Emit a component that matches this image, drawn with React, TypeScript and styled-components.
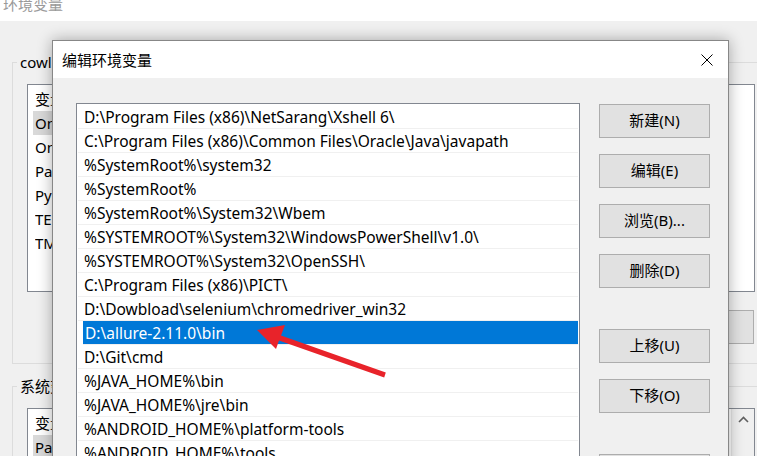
import React from 'react'
import styled, { createGlobalStyle } from 'styled-components'

const GlobalStyle = createGlobalStyle`
  html, body {
    margin: 0;
    padding: 0;
    overflow: hidden;
  }
  body {
    font-family: "Noto Sans", "Noto Sans CJK SC", sans-serif;
    font-size: 15px;
    color: #000;
  }
`

const Desktop = styled.div`
  position: relative;
  width: 757px;
  height: 456px;
  overflow: hidden;
  background: #f0f0f0;
`

// background window (环境变量)
const BgWindow = styled.div`
  display: flex;
  flex-direction: column;
  width: 800px;
  height: 100%;
`

const BgTitleBar = styled.div`
  flex: none;
  height: 21px;
  background: #fff;
  padding-left: 3px;
  overflow: hidden;
`

const BgTitleText = styled.div`
  margin-top: -3px;
  line-height: 15px;
  color: #9a9a9a;
`

const BgBody = styled.div`
  display: flex;
  flex-direction: column;
  padding-left: 12px;
`

const GroupBox = styled.fieldset<{ $top: number }>`
  margin: ${({ $top }) => $top}px 0 0 0;
  padding: 12px 14px 19px 14px;
  border: 1px solid #dcdcdc;
  width: 758px;
  min-width: 0;
  box-sizing: border-box;
  display: flex;
  flex-direction: column;
`

const GroupLabel = styled.legend`
  margin-left: -10px;
  padding: 0 3px;
  line-height: 20px;
`

const VarList = styled.div<{ $height: number }>`
  display: flex;
  height: ${({ $height }) => $height}px;
  border: 1px solid #828790;
  background: #fff;
  box-sizing: border-box;
`

const VarListInner = styled.div`
  flex: 1;
  display: flex;
  flex-direction: column;
`

const VarHeader = styled.div`
  display: flex;
  height: 26px;
  align-items: center;
  padding-left: 7px;
`

const VarHeaderCell = styled.div<{ $width: number }>`
  width: ${({ $width }) => $width}px;
`

const VarRow = styled.div<{ $selected?: boolean }>`
  display: flex;
  align-self: flex-start;
  height: 24px;
  line-height: 24px;
  margin-left: 5px;
  padding-left: 2px;
  background: ${({ $selected }) => ($selected ? '#d9d9d9' : 'transparent')};
  white-space: nowrap;
`

const VarCell = styled.div<{ $width: number }>`
  width: ${({ $width }) => $width}px;
  overflow: hidden;
`

const ScrollBar = styled.div`
  width: 23px;
  flex: none;
  background: #f0f0f0;
  border-left: 1px solid #e6e6e6;
  display: flex;
  justify-content: center;
  padding-top: 7px;
  box-sizing: border-box;
`

const BgButtonRow = styled.div`
  display: flex;
  justify-content: flex-end;
  gap: 14px;
  margin-top: 18px;
  margin-right: 1px;
`

const WinButton = styled.div<{ $gapBefore?: boolean }>`
  width: 111px;
  height: 34px;
  box-sizing: border-box;
  border: 1px solid #adadad;
  background: #e1e1e1;
  display: flex;
  align-items: center;
  justify-content: center;
  line-height: 20px;
  padding-bottom: 3px;
  white-space: nowrap;
  margin-top: ${({ $gapBefore }) => ($gapBefore ? '25px' : '0')};
`

// dialog (编辑环境变量)
const Dialog = styled.div`
  position: absolute;
  left: 52px;
  top: 40px;
  width: 677px;
  height: 470px;
  box-sizing: border-box;
  border: 1px solid #878787;
  background: #f0f0f0;
  box-shadow: 0 0 14px rgba(0, 0, 0, 0.32);
  display: flex;
  flex-direction: column;
`

const DialogTitleBar = styled.div`
  flex: none;
  height: 37px;
  background: #fff;
  display: flex;
  align-items: center;
  justify-content: space-between;
  padding-left: 9px;
`

const CloseButton = styled.div`
  width: 42px;
  height: 37px;
  display: flex;
  align-items: center;
  justify-content: center;
`

const DialogBody = styled.div`
  display: flex;
  gap: 19px;
  padding: 25px 18px 0 23px;
`

const PathList = styled.div`
  width: 504px;
  height: 420px;
  flex: none;
  box-sizing: border-box;
  border: 1px solid #828790;
  background: #fff;
  padding: 1px 1px 0 1px;
`

const PathRow = styled.div<{ $selected?: boolean }>`
  height: 21px;
  padding-top: 2px;
  line-height: 21px;
  font-size: 15.5px;
  border-bottom: 1px solid #f0f0f0;
  margin-left: ${({ $selected }) => ($selected ? '5px' : '0')};
  padding-left: ${({ $selected }) => ($selected ? '2px' : '6px')};
  background: ${({ $selected }) => ($selected ? '#0078d7' : 'transparent')};
  color: ${({ $selected }) => ($selected ? '#fff' : '#000')};
  white-space: nowrap;
`

const ButtonColumn = styled.div`
  display: flex;
  flex-direction: column;
  gap: 16px;
  margin-top: 1px;
`

const ArrowLayer = styled.svg`
  position: absolute;
  left: 0;
  top: 0;
  pointer-events: none;
`

const paths = [
  'D:\\Program Files (x86)\\NetSarang\\Xshell 6\\',
  'C:\\Program Files (x86)\\Common Files\\Oracle\\Java\\javapath',
  '%SystemRoot%\\system32',
  '%SystemRoot%',
  '%SystemRoot%\\System32\\Wbem',
  '%SYSTEMROOT%\\System32\\WindowsPowerShell\\v1.0\\',
  '%SYSTEMROOT%\\System32\\OpenSSH\\',
  'C:\\Program Files (x86)\\PICT\\',
  'D:\\Dowbload\\selenium\\chromedriver_win32',
  'D:\\allure-2.11.0\\bin',
  'D:\\Git\\cmd',
  '%JAVA_HOME%\\bin',
  '%JAVA_HOME%\\jre\\bin',
  '%ANDROID_HOME%\\platform-tools',
  '%ANDROID_HOME%\\tools',
  '%ANDROID_HOME%\\build-tools',
]

const buttons = [
  { label: '新建(N)' },
  { label: '编辑(E)' },
  { label: '浏览(B)...' },
  { label: '删除(D)' },
  { label: '上移(U)', gap: true },
  { label: '下移(O)' },
  { label: '编辑文本(T)...', gap: true },
]

const userVars = [
  ['OneDrive', 'C:\\Users\\cowl\\OneDrive'],
  ['OneDriveConsumer', 'C:\\Users\\cowl\\OneDrive'],
  ['Path', 'C:\\Users\\cowl\\AppData\\Local\\Microsoft\\WindowsApps;'],
  ['PyCharm Community Edition', 'D:\\PyCharm\\bin;'],
  ['TEMP', 'C:\\Users\\cowl\\AppData\\Local\\Temp'],
  ['TMP', 'C:\\Users\\cowl\\AppData\\Local\\Temp'],
]

const sysVars = [
  ['Path', 'D:\\Program Files (x86)\\NetSarang\\Xshell 6\\;'],
  ['PATHEXT', '.COM;.EXE;.BAT;.CMD;.VBS;.VBE;.JS'],
]

function CloseIcon() {
  return (
    <svg width="12" height="12" viewBox="0 0 12 12">
      <path d="M0.5 0.5 L11.5 11.5 M11.5 0.5 L0.5 11.5" stroke="#000" strokeWidth="1" fill="none" />
    </svg>
  )
}

function ChevronUp() {
  return (
    <svg width="11" height="7" viewBox="0 0 11 7">
      <path d="M1 6 L5.5 1.5 L10 6" stroke="#606060" strokeWidth="1.6" fill="none" />
    </svg>
  )
}

export default function App() {
  return (
    <Desktop>
      <GlobalStyle />
      <BgWindow>
        <BgTitleBar>
          <BgTitleText>环境变量</BgTitleText>
        </BgTitleBar>
        <BgBody>
          <GroupBox $top={31}>
            <GroupLabel>cowl 的用户变量(U)</GroupLabel>
            <VarList $height={208}>
              <VarListInner>
                <VarHeader>
                  <VarHeaderCell $width={170}>变量</VarHeaderCell>
                  <VarHeaderCell $width={400}>值</VarHeaderCell>
                </VarHeader>
                {userVars.map(([name, value], i) => (
                  <VarRow key={name} $selected={i === 0}>
                    <VarCell $width={170}>{name}</VarCell>
                    <VarCell $width={500}>{value}</VarCell>
                  </VarRow>
                ))}
              </VarListInner>
            </VarList>
            <BgButtonRow>
              <WinButton>新建(N)...</WinButton>
              <WinButton>编辑(E)...</WinButton>
              <WinButton>删除(D)</WinButton>
            </BgButtonRow>
          </GroupBox>
          <GroupBox $top={12}>
            <GroupLabel>系统变量(S)</GroupLabel>
            <VarList $height={120}>
              <VarListInner>
                <VarHeader>
                  <VarHeaderCell $width={170}>变量</VarHeaderCell>
                  <VarHeaderCell $width={400}>值</VarHeaderCell>
                </VarHeader>
                {sysVars.map(([name, value], i) => (
                  <VarRow key={name} $selected={i === 0}>
                    <VarCell $width={170}>{name}</VarCell>
                    <VarCell $width={500}>{value}</VarCell>
                  </VarRow>
                ))}
              </VarListInner>
              <ScrollBar>
                <ChevronUp />
              </ScrollBar>
            </VarList>
          </GroupBox>
        </BgBody>
      </BgWindow>

      <Dialog>
        <DialogTitleBar>
          <span>编辑环境变量</span>
          <CloseButton>
            <CloseIcon />
          </CloseButton>
        </DialogTitleBar>
        <DialogBody>
          <PathList>
            {paths.map((p, i) => (
              <PathRow key={p} $selected={i === 9}>
                {p}
              </PathRow>
            ))}
          </PathList>
          <ButtonColumn>
            {buttons.map((b) => (
              <WinButton key={b.label} $gapBefore={b.gap}>
                {b.label}
              </WinButton>
            ))}
          </ButtonColumn>
        </DialogBody>
      </Dialog>

      <ArrowLayer width="757" height="456" viewBox="0 0 757 456">
        <polygon
          points="257,330 285,325 281,335.5 385.8,372.6 384.2,377.6 279,340.5 276,349"
          fill="#e8232a"
        />
      </ArrowLayer>
    </Desktop>
  )
}
